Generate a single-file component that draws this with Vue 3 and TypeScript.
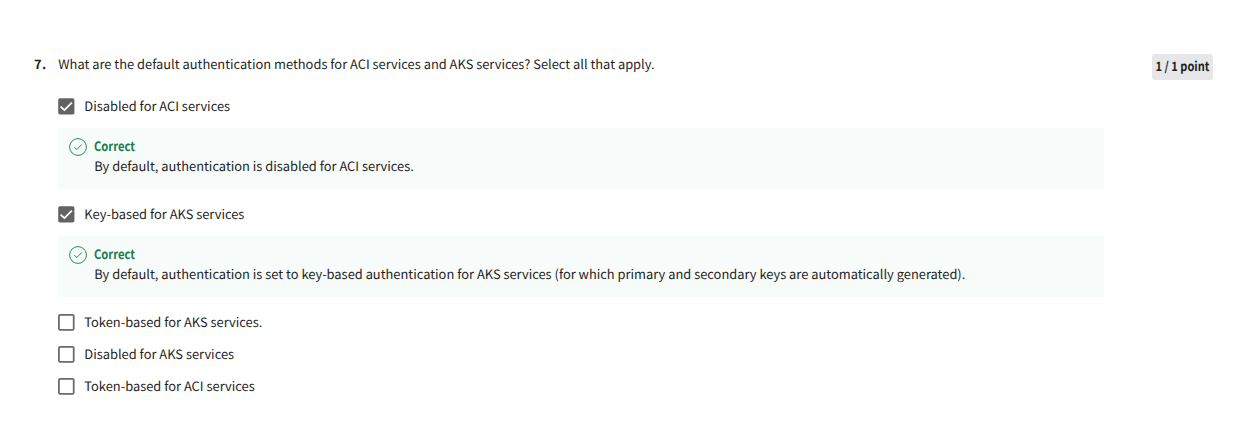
<script setup lang="ts">
interface Option {
  label: string
  checked: boolean
  feedback?: string
}

const options: Option[] = [
  {
    label: 'Disabled for ACI services',
    checked: true,
    feedback: 'By default, authentication is disabled for ACI services.',
  },
  {
    label: 'Key-based for AKS services',
    checked: true,
    feedback:
      'By default, authentication is set to key-based authentication for AKS services (for which primary and secondary keys are automatically generated).',
  },
  { label: 'Token-based for AKS services.', checked: false },
  { label: 'Disabled for AKS services', checked: false },
  { label: 'Token-based for ACI services', checked: false },
]
</script>

<template>
  <main class="question">
    <div class="number">7.</div>
    <section class="content">
      <p class="prompt">What are the default authentication methods for ACI services and AKS services? Select all that apply.</p>
      <div v-for="option in options" :key="option.label" class="option">
        <div class="choice">
          <svg class="box" viewBox="0 0 17 17" width="17" height="17">
            <template v-if="option.checked">
              <rect x="0.2" y="0.2" width="16.2" height="16.4" rx="1.8" fill="#636363" />
              <path d="M2.6 8.6 6.4 12.1 13.9 4.6" fill="none" stroke="#fff" stroke-width="1.8" />
            </template>
            <rect v-else x="0.9" y="0.9" width="14.8" height="15" rx="1.2" fill="#fff" stroke="#6b6b6b" stroke-width="1.8" />
          </svg>
          <span class="label">{{ option.label }}</span>
        </div>
        <div v-if="option.feedback" class="feedback">
          <svg class="tick" viewBox="0 0 18 18" width="18" height="18" fill="none" stroke="#2b8a5c">
            <circle cx="9" cy="9" r="8.4" />
            <path d="M5.3 9.2 7.9 11.5 12.7 6.5" />
          </svg>
          <div>
            <div class="verdict">Correct</div>
            <div class="reason">{{ option.feedback }}</div>
          </div>
        </div>
      </div>
    </section>
    <div class="score"><span class="points">1 / 1 point</span></div>
  </main>
</template>

<style>
body {
  background: #fff;
}
</style>

<style scoped>
.question {
  box-sizing: border-box;
  display: flex;
  align-items: flex-start;
  width: 1237px;
  height: 441px;
  padding: 54px 24px 0 34px;
  overflow: hidden;
  color: #1f1f1f;
  font-family: "Noto Sans CJK SC", "Source Sans Pro", sans-serif;
  font-size: 12.88px;
  line-height: 20px;
  text-rendering: geometricPrecision;
}
.number {
  width: 24px;
  font-weight: 700;
  letter-spacing: 0.3px;
}
.content {
  width: 1046px;
}
.prompt {
  margin: 0 0 16px;
  padding-left: 0.3px;
}
.choice {
  display: flex;
  align-items: center;
  height: 32px;
}
.box {
  flex: none;
  margin-right: 9.3px;
}
.feedback {
  display: flex;
  box-sizing: border-box;
  height: 61px;
  margin: 6px 0 9px;
  padding: 8px 11px;
  background: #f7fbfa;
}
.tick {
  flex: none;
  margin: 2px 7.3px 0 0;
}
.verdict {
  width: max-content;
  color: #1d7c50;
  font-weight: 700;
  transform: scaleX(0.87);
  transform-origin: left;
}
.score {
  box-sizing: border-box;
  display: flex;
  justify-content: center;
  width: 61px;
  height: 26px;
  margin-left: auto;
  border-radius: 3px;
  background: #e5e7e8;
  font-weight: 700;
  line-height: 23px;
  white-space: nowrap;
}
.points {
  transform: scaleX(0.855);
}
</style>
